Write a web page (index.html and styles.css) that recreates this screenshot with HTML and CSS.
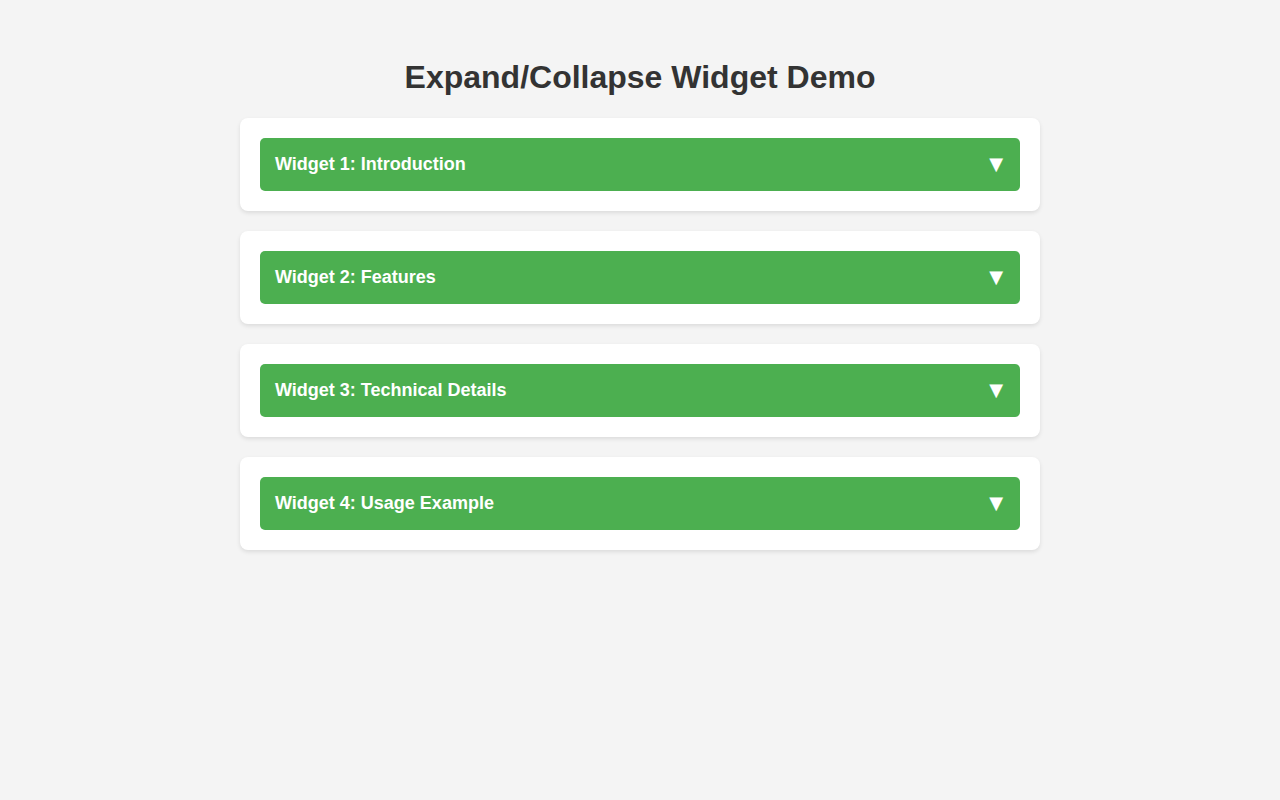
FILE: index.html
```html
<!DOCTYPE html>
<html lang="en">
<head>
<meta charset="utf-8">
<title>Expand/Collapse Widget Demo</title>
<link rel="stylesheet" href="styles.css">
</head>
<body>
<main class="container">
  <h1 class="title">Expand/Collapse Widget Demo</h1>
  <div class="widget">
    <div class="widget-header"><span class="widget-title">Widget 1: Introduction</span><span class="arrow">▼</span></div>
  </div>
  <div class="widget">
    <div class="widget-header"><span class="widget-title">Widget 2: Features</span><span class="arrow">▼</span></div>
  </div>
  <div class="widget">
    <div class="widget-header"><span class="widget-title">Widget 3: Technical Details</span><span class="arrow">▼</span></div>
  </div>
  <div class="widget">
    <div class="widget-header"><span class="widget-title">Widget 4: Usage Example</span><span class="arrow">▼</span></div>
  </div>
</main>
</body>
</html>
```
FILE: styles.css
```css
html, body {
  margin: 0;
  padding: 0;
}
body {
  background: #f4f4f4;
  font-family: "Liberation Sans", Arial, sans-serif;
  color: #333;
}
.container {
  width: 800px;
  margin: 0 auto;
  padding-top: 38px;
}
.title {
  font-size: 32px;
  font-weight: bold;
  text-align: center;
  color: #333;
  margin: 0.67em 0;
}
.widget {
  background: #fff;
  border-radius: 8px;
  box-shadow: 0 2px 4px rgba(0, 0, 0, 0.1);
  padding: 20px;
  margin-bottom: 20px;
}
.widget-header {
  background: #4caf50;
  color: #fff;
  border-radius: 5px;
  padding: 0 15px;
  display: flex;
  align-items: center;
  justify-content: space-between;
  font-size: 18px;
  font-weight: bold;
}
.arrow {
  font-size: 18px;
  line-height: 23px;
  padding: 14px 0 16px;
  margin-right: 2px;
  font-weight: normal;
  font-family: "DejaVu Sans", sans-serif;
}
```
